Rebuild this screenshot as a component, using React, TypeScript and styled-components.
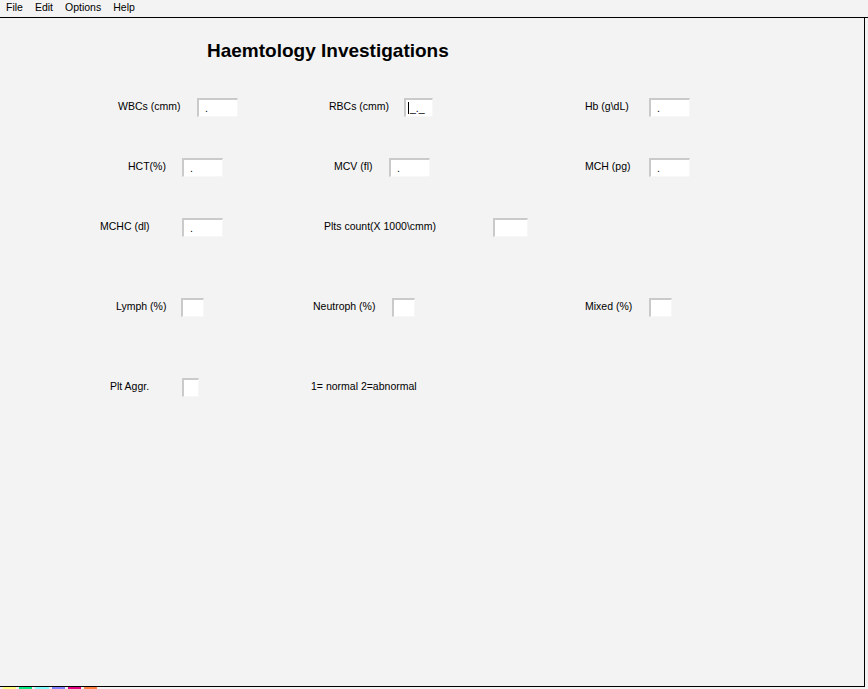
import React from "react";
import styled, { createGlobalStyle } from "styled-components";

const GlobalStyle = createGlobalStyle`
  html, body {
    margin: 0;
    padding: 0;
    background: #f3f3f3;
    overflow: hidden;
  }
  body {
    font-family: "Liberation Sans", Arial, sans-serif;
    color: #000;
  }
`;

const Page = styled.div`
  width: 868px;
  height: 689px;
  display: flex;
  flex-direction: column;
  background: #f3f3f3;
`;

const MenuBar = styled.div`
  height: 17px;
  display: flex;
  align-items: center;
  border-bottom: 1px solid #000;
  font-size: 10.5px;
`;

const MenuItem = styled.span`
  padding: 0 6px;
  line-height: 14px;
  margin-top: -3px;
`;

const Client = styled.div`
  width: 865px;
  height: 669px;
  border-right: 1px solid #000;
  border-bottom: 1px solid #000;
  box-sizing: border-box;
  display: flex;
  flex-direction: column;
`;

const Title = styled.h1`
  margin: 21px 0 0 207px;
  font-size: 19px;
  line-height: 23px;
  font-weight: bold;
`;

const Rows = styled.div`
  margin-top: 36px;
  display: flex;
  flex-direction: column;
`;

const Row = styled.div<{ $h: number; $pad: number }>`
  height: ${(p) => p.$h}px;
  padding-left: ${(p) => p.$pad}px;
  display: flex;
  align-items: flex-start;
`;

const Field = styled.div<{ $w?: number }>`
  display: flex;
  align-items: flex-start;
  width: ${(p) => (p.$w ? `${p.$w}px` : "auto")};
  flex-shrink: 0;
`;

const Label = styled.span<{ $w: number }>`
  width: ${(p) => p.$w}px;
  font-size: 10.5px;
  line-height: 13px;
  padding-top: 2px;
  white-space: nowrap;
  flex-shrink: 0;
`;

const Box = styled.div<{ $w: number }>`
  width: ${(p) => p.$w}px;
  height: 19px;
  box-sizing: border-box;
  background: #fff;
  border-top: 2px solid #cacaca;
  border-left: 2px solid #cacaca;
  border-right: 1px solid #f7f7f7;
  border-bottom: 1px solid #f7f7f7;
  font-size: 10.5px;
  line-height: 15px;
  padding-left: 6px;
  display: flex;
  align-items: flex-end;
`;

const Caret = styled.span`
  display: inline-block;
  width: 1px;
  height: 12px;
  background: #000;
  margin: 0 1px 2px -4px;
`;

const Note = styled.span`
  font-size: 10.5px;
  line-height: 13px;
  padding-top: 2px;
  white-space: nowrap;
`;

const Swatches = styled.div`
  display: flex;
  height: 2px;
  padding-left: 3px;
  gap: 3px;
`;

const Swatch = styled.div<{ $c: string; $w: number }>`
  width: ${(p) => p.$w}px;
  background: ${(p) => p.$c};
`;

const swatches = [
  { c: "#ffff80", w: 13 },
  { c: "#00e880", w: 13 },
  { c: "#80ffff", w: 14 },
  { c: "#8080ff", w: 13 },
  { c: "#e00080", w: 13 },
  { c: "#ff8040", w: 13 },
];

export default function App() {
  return (
    <Page>
      <GlobalStyle />
      <MenuBar>
        <MenuItem>File</MenuItem>
        <MenuItem>Edit</MenuItem>
        <MenuItem>Options</MenuItem>
        <MenuItem>Help</MenuItem>
      </MenuBar>
      <Client>
        <Title>Haemtology Investigations</Title>
        <Rows>
          <Row $h={60} $pad={118}>
            <Field $w={211}>
              <Label $w={79}>WBCs (cmm)</Label>
              <Box $w={41}>.</Box>
            </Field>
            <Field $w={256}>
              <Label $w={75}>RBCs (cmm)</Label>
              <Box $w={29}>
                <Caret />
                _._
              </Box>
            </Field>
            <Field>
              <Label $w={64}>Hb (g\dL)</Label>
              <Box $w={41}>.</Box>
            </Field>
          </Row>
          <Row $h={60} $pad={128}>
            <Field $w={206}>
              <Label $w={54}>HCT(%)</Label>
              <Box $w={41}>.</Box>
            </Field>
            <Field $w={251}>
              <Label $w={55}>MCV (fl)</Label>
              <Box $w={41}>.</Box>
            </Field>
            <Field>
              <Label $w={64}>MCH (pg)</Label>
              <Box $w={41}>.</Box>
            </Field>
          </Row>
          <Row $h={80} $pad={100}>
            <Field $w={224}>
              <Label $w={82}>MCHC (dl)</Label>
              <Box $w={41}>.</Box>
            </Field>
            <Field>
              <Label $w={169}>Plts count(X 1000\cmm)</Label>
              <Box $w={35} />
            </Field>
          </Row>
          <Row $h={80} $pad={116}>
            <Field $w={197}>
              <Label $w={65}>Lymph (%)</Label>
              <Box $w={23} />
            </Field>
            <Field $w={272}>
              <Label $w={79}>Neutroph (%)</Label>
              <Box $w={23} />
            </Field>
            <Field>
              <Label $w={64}>Mixed (%)</Label>
              <Box $w={23} />
            </Field>
          </Row>
          <Row $h={60} $pad={110}>
            <Field $w={201}>
              <Label $w={72}>Plt Aggr.</Label>
              <Box $w={17} />
            </Field>
            <Note>1= normal 2=abnormal</Note>
          </Row>
        </Rows>
      </Client>
      <Swatches>
        {swatches.map((s, i) => (
          <Swatch key={i} $c={s.c} $w={s.w} />
        ))}
      </Swatches>
    </Page>
  );
}
